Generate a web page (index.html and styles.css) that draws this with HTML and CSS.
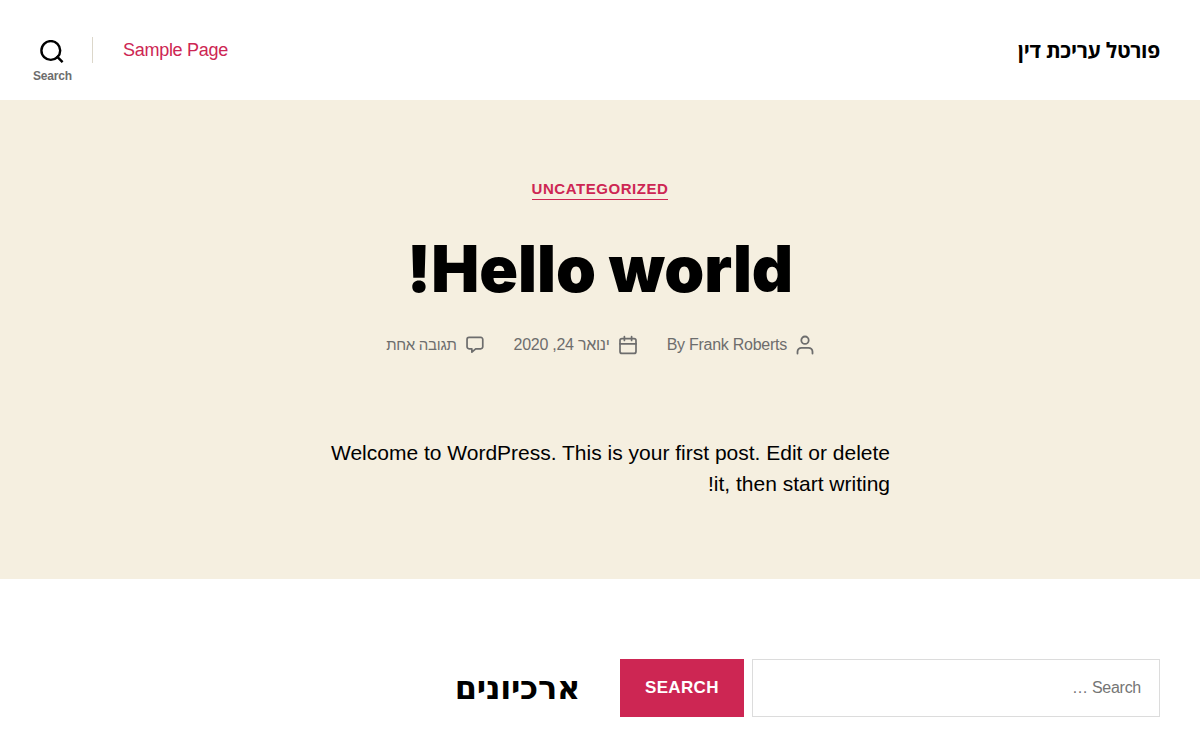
FILE: index.html
```html
<!DOCTYPE html>
<html lang="he" dir="rtl">

<head>
    <meta charset="UTF-8">
    <meta name="viewport" content="width=device-width, initial-scale=1.0">
    <title>פורטל עריכת דין</title>

    <link rel="stylesheet" href="styles.css">
</head>

<body>
    <header class="site-header">
        <a class="site-title" href="#">פורטל עריכת דין</a>

        <div class="header-nav">
            <nav class="primary-menu">
                <a href="#">Sample Page</a>
            </nav>
            <button class="search-toggle" type="button">
                <svg width="24" height="23" viewBox="0 0 24 23" fill="none" stroke="currentColor" stroke-width="2.4" aria-hidden="true">
                    <circle cx="10.8" cy="10.5" r="9.4" />
                    <path d="M16.6 16.2L22.6 22.2" />
                </svg>
                <span>Search</span>
            </button>
        </div>
    </header>

    <main>
        <article class="post">
            <div class="post-category"><a href="#">Uncategorized</a></div>
            <h1 class="post-title"><a href="#">Hello world!</a></h1>

            <ul class="post-meta">
                <li>
                    <svg width="18" height="20" viewBox="0 0 18 20" fill="none" stroke="currentColor" stroke-width="1.8" stroke-linecap="round" aria-hidden="true">
                        <circle cx="9" cy="5.2" r="3.7" />
                        <path d="M1.5 18.5V16.8A4 4 0 0 1 5.5 12.8H12.5A4 4 0 0 1 16.5 16.8V18.5" />
                    </svg>
                    <a href="#">By Frank Roberts</a>
                </li>
                <li>
                    <svg width="18" height="20" viewBox="0 0 18 20" fill="none" stroke="currentColor" stroke-width="1.7" stroke-linecap="round" aria-hidden="true">
                        <rect x="1" y="3.6" width="16" height="14.8" rx="2" />
                        <path d="M1 8.8H17M5.4 1.5V5.4M12.6 1.5V5.4" />
                    </svg>
                    <a href="#">ינואר 24, 2020</a>
                </li>
                <li>
                    <svg width="18" height="20" viewBox="0 0 19 20" fill="none" stroke="currentColor" stroke-width="1.8" stroke-linejoin="round" aria-hidden="true">
                        <path d="M3.2 2H15.6A2.1 2.1 0 0 1 17.7 4.1V11.9A2.1 2.1 0 0 1 15.6 14H10.2L6.2 17.6V14H3.2A2.1 2.1 0 0 1 1.1 11.9V4.1A2.1 2.1 0 0 1 3.2 2Z" />
                    </svg>
                    <a class="hebrew" href="#">תגובה אחת</a>
                </li>
            </ul>

            <div class="post-content">
                <p>Welcome to WordPress. This is your first post. Edit or delete it, then start writing!</p>
            </div>
        </article>
    </main>

    <footer class="footer-widgets">
        <form class="search-form" action="" method="get">
            <input class="search-field" type="search" name="s" placeholder="Search …" aria-label="Search">
            <button class="search-submit" type="submit">Search</button>
        </form>
        <section>
            <h2 class="widget-title">ארכיונים</h2>
        </section>
    </footer>
</body>

</html>
```
FILE: styles.css
```css
* {
    box-sizing: border-box;
}

body {
    margin: 0;
    background-color: #fff;
    color: #000;
    font-family: "Liberation Sans", Arial, sans-serif;
    font-size: 18px;
    letter-spacing: -0.015em;
}

a {
    color: inherit;
    text-decoration: none;
}

/* header */
.site-header {
    display: flex;
    align-items: center;
    justify-content: space-between;
    min-height: 100px;
    padding: 0 40px 0 33px;
}

.site-title {
    font-family: "Open Sans", "Liberation Sans", sans-serif;
    font-size: 21px;
    font-weight: bold;
}

.header-nav {
    display: flex;
    align-items: center;
}

.primary-menu {
    color: #cd2653;
    padding: 0 30px;
    border-left: 1px solid #dcd7ca;
    line-height: 26px;
}

.search-toggle {
    display: flex;
    flex-direction: column;
    align-items: center;
    gap: 6px;
    margin: 0 20px 0 0;
    padding: 22px 0 0;
    border: none;
    background: none;
    color: #000;
    font-family: inherit;
    cursor: pointer;
}

.search-toggle span {
    color: #6d6d6d;
    font-size: 12px;
    font-weight: bold;
    letter-spacing: -0.015em;
}

/* post */
.post {
    padding: 80px 20px;
    background-color: #f5efe0;
    text-align: center;
}

.post-category {
    color: #cd2653;
    font-size: 15px;
    font-weight: bold;
    letter-spacing: 0.037em;
    line-height: 18px;
    text-transform: uppercase;
}

.post-category a {
    display: inline-block;
    padding-bottom: 1px;
    border-bottom: 1px solid #cd2653;
}

.post-title {
    margin: 30px 0 0;
    font-family: Inter, "Liberation Sans", sans-serif;
    font-size: 64px;
    font-weight: 900;
    letter-spacing: normal;
    line-height: 78px;
}

.post-meta {
    display: flex;
    justify-content: center;
    gap: 30px;
    margin: 25px 0 0;
    padding: 0;
    list-style: none;
    color: #6d6d6d;
    font-size: 16px;
    line-height: 24px;
}

.post-meta li {
    display: flex;
    align-items: center;
    gap: 9px;
}

.post-meta .hebrew {
    font-size: 15px;
}

.post-content {
    max-width: 580px;
    margin: 80px auto 0;
    font-size: 21px;
    letter-spacing: normal;
    line-height: 31px;
    text-align: right;
}

.post-content p {
    margin: 0;
}

/* footer */
.footer-widgets {
    display: grid;
    grid-template-columns: 1fr 1fr;
    align-items: center;
    gap: 40px;
    padding: 80px 40px 20px;
}

.search-form {
    display: flex;
    gap: 8px;
}

.search-field {
    flex: 1;
    min-width: 0;
    height: 58px;
    padding: 0 18px;
    border: 1px solid #dcdcdc;
    border-radius: 0;
    background-color: #fff;
    font-family: inherit;
    font-size: 16px;
    letter-spacing: inherit;
    appearance: none;
}

.search-field::placeholder {
    color: #757575;
}

.search-submit {
    padding: 0 25px;
    border: none;
    background-color: #cd2653;
    color: #fff;
    font-family: inherit;
    font-size: 17px;
    font-weight: bold;
    letter-spacing: 0.02em;
    text-transform: uppercase;
    cursor: pointer;
}

.widget-title {
    margin: 0;
    font-family: "DejaVu Sans", "Liberation Sans", sans-serif;
    font-size: 32px;
    font-weight: bold;
}
```
